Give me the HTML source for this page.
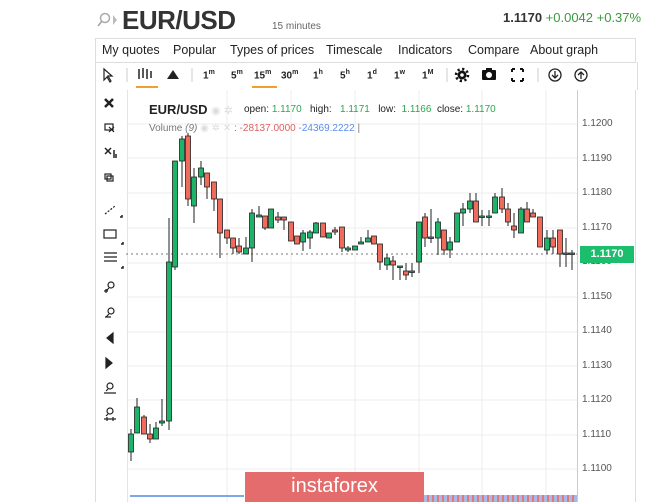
<!DOCTYPE html>
<html><head><meta charset="utf-8"><style>
body{margin:0;width:665px;height:502px;background:#fff;font-family:"Liberation Sans",sans-serif;position:relative;overflow:hidden;color:#222}
.a{position:absolute;white-space:nowrap}
.menu{left:95px;top:38px;width:539px;height:23px;border:1px solid #ddd;font-size:12.5px}
.menu span{position:absolute;top:4px}
.tb{font-size:10px;font-weight:bold;top:69px}
.tb sup{font-size:7px}
.g{color:#2aa84a}
</style></head><body>
<svg class="a" style="left:97px;top:11px" width="22" height="18"><circle cx="8" cy="7" r="4.5" fill="none" stroke="#aaa" stroke-width="1.5"/><line x1="5" y1="10" x2="1" y2="15" stroke="#aaa" stroke-width="1.8"/><path d="M16 4 L20 9 L16 14Z" fill="#bbb"/></svg>
<div class="a" style="left:122px;top:5px;font-size:26px;font-weight:bold;color:#333;letter-spacing:-0.5px">EUR/USD</div>
<div class="a" style="left:272px;top:21px;font-size:10px;color:#666">15 minutes</div>
<div class="a" style="left:503px;top:10px;font-size:13px;font-weight:bold;color:#333">1.1170 <span style="font-weight:normal;color:#3a9a3a">+0.0042 +0.37%</span></div>
<div class="a menu"><span style="left:6px">My quotes</span><span style="left:77px">Popular</span><span style="left:134px">Types of prices</span><span style="left:230px">Timescale</span><span style="left:302px">Indicators</span><span style="left:372px">Compare</span><span style="left:434px">About graph</span></div>
<div class="a" style="left:95px;top:62px;width:541px;height:28px;border-left:1px solid #ddd;border-right:1px solid #ddd"></div>
<svg class="a" style="left:95px;top:62px" width="540" height="28">
<path d="M9 7 L9 18 L12 15 L15 20 L16 19 L13 14 L17 14Z" fill="none" stroke="#222" stroke-width="1.2"/>
<line x1="32" y1="6" x2="32" y2="20" stroke="#ccc"/>
<g stroke="#222" stroke-width="1.5"><line x1="44" y1="7" x2="44" y2="17"/><line x1="48" y1="6" x2="48" y2="16"/><line x1="52" y1="7" x2="52" y2="17"/><line x1="56" y1="9" x2="56" y2="16"/></g>
<rect x="41" y="24" width="22" height="2" fill="#f0a030"/>
<path d="M72 17 L78 8 L84 17Z" fill="#222"/>
<line x1="97" y1="6" x2="97" y2="20" stroke="#ccc"/>
<rect x="157" y="24" width="25" height="2" fill="#f0a030"/>
<line x1="352" y1="6" x2="352" y2="20" stroke="#ccc"/>
<circle cx="367" cy="13" r="4.5" fill="#111"/><circle cx="367" cy="13" r="6" fill="none" stroke="#111" stroke-width="2.5" stroke-dasharray="2.2 2.5"/><circle cx="367" cy="13" r="1.8" fill="#fff"/>
<rect x="387" y="8" width="14" height="10" rx="1" fill="#111"/><rect x="391" y="6" width="6" height="3" fill="#111"/><circle cx="394" cy="13" r="3" fill="#fff"/>
<path d="M417 7h3M417 7v3M428 7h-3M428 7v3M417 19h3M417 19v-3M428 19h-3M428 19v-3" stroke="#111" stroke-width="2"/>
<line x1="443" y1="6" x2="443" y2="20" stroke="#ccc"/>
<circle cx="460" cy="13" r="6" fill="none" stroke="#222" stroke-width="1.3"/><path d="M460 9v7M457 13l3 3 3-3" stroke="#222" fill="none" stroke-width="1.3"/>
<circle cx="486" cy="13" r="6" fill="none" stroke="#222" stroke-width="1.3"/><path d="M486 17v-7M483 13l3-3 3 3" stroke="#222" fill="none" stroke-width="1.3"/>
</svg>
<div class="a tb" style="left:203px">1<sup>m</sup></div>
<div class="a tb" style="left:231px">5<sup>m</sup></div>
<div class="a tb" style="left:254px">15<sup>m</sup></div>
<div class="a tb" style="left:281px">30<sup>m</sup></div>
<div class="a tb" style="left:313px">1<sup>h</sup></div>
<div class="a tb" style="left:340px">5<sup>h</sup></div>
<div class="a tb" style="left:367px">1<sup>d</sup></div>
<div class="a tb" style="left:394px">1<sup>w</sup></div>
<div class="a tb" style="left:422px">1<sup>M</sup></div>
<div class="a" style="left:95px;top:90px;width:31px;height:412px;border-left:1px solid #ddd;border-right:1px solid #e4e4e4"></div>
<div class="a" style="left:635px;top:90px;width:1px;height:412px;background:#ddd"></div>
<div class="a" style="left:577px;top:90px;width:1px;height:412px;background:#ccc"></div>
<svg class="a" style="left:95px;top:90px" width="31" height="340" fill="none" stroke="#222" stroke-width="1.2">
<path d="M10 9l8 8M18 9l-8 8" stroke-width="2.5"/>
<rect x="10" y="34" width="8" height="6"/><path d="M14 37l5 5M19 37l-5 5"/>
<path d="M10 58l6 6M16 58l-6 6M19 60v8M21 64v4" stroke-width="1.5"/>
<rect x="10" y="84" width="6" height="5"/><rect x="12" y="86" width="6" height="5"/>
<path d="M10 124l10-8" stroke-dasharray="2 1.5"/><path d="M25 127l2 0 0-2" stroke-width="1.5"/>
<rect x="9" y="140" width="12" height="8"/><path d="M26 154l2 0 0-2" stroke-width="1.5"/>
<path d="M9 163h13M9 167h13M9 171h13"/><path d="M26 178l2 0 0-2" stroke-width="1.5"/>
<circle cx="16" cy="195" r="3"/><path d="M14 198l-3 3M9 201h4M11 199v4"/>
<circle cx="16" cy="221" r="3"/><path d="M14 224l-3 3M10 227h6"/>
<path d="M18 243v10l-6-5z" fill="#222"/><path d="M11 268v10l6-5z" fill="#222"/>
<circle cx="15" cy="296" r="3"/><path d="M13 299l-2 2M9 303h12"/>
<circle cx="15" cy="321" r="3"/><path d="M13 324l-2 2M9 329h12M12 327v4M18 327v4"/>
</svg>
<svg class="a" style="left:126px;top:90px" width="451" height="412">
<g stroke="#eee">
<line x1="101" y1="0" x2="101" y2="412"/><line x1="165" y1="0" x2="165" y2="412"/><line x1="229" y1="0" x2="229" y2="412"/><line x1="293" y1="0" x2="293" y2="412"/><line x1="356" y1="0" x2="356" y2="412"/><line x1="420" y1="0" x2="420" y2="412"/>
<line x1="0" y1="34" x2="451" y2="34"/><line x1="0" y1="68" x2="451" y2="68"/><line x1="0" y1="103" x2="451" y2="103"/><line x1="0" y1="138" x2="451" y2="138"/><line x1="0" y1="173" x2="451" y2="173"/><line x1="0" y1="207" x2="451" y2="207"/><line x1="0" y1="242" x2="451" y2="242"/><line x1="0" y1="276" x2="451" y2="276"/><line x1="0" y1="310" x2="451" y2="310"/><line x1="0" y1="345" x2="451" y2="345"/><line x1="0" y1="379" x2="451" y2="379"/>
</g>
<line x1="0" y1="164" x2="451" y2="164" stroke="#777" stroke-dasharray="2 3"/>
</svg>
<svg class="a" style="left:0;top:0" width="665" height="502" id="c"></svg>
<div class="a" style="left:149px;top:102px;font-size:13px;font-weight:bold;color:#222">EUR/USD <span style="color:#ddd;font-weight:normal;font-size:11px">◉ ✲</span></div>
<div class="a" style="left:244px;top:104px;font-size:10px;color:#222">open: <span class="g">1.1170</span>&nbsp;&nbsp; high:&nbsp;&nbsp; <span class="g">1.1171</span>&nbsp;&nbsp; low:&nbsp; <span class="g">1.1166</span>&nbsp; close: <span class="g">1.1170</span></div>
<div class="a" style="left:149px;top:123px;font-size:10px;color:#777">Volume <i>(9)</i> <span style="color:#ddd">◉ ✲ ✕</span> : <span style="color:#e06060">-28137.0000</span> <span style="color:#5b8def">-24369.2222</span> |</div>
<div class="a" style="left:582px;top:107px;font-size:10px;color:#555;line-height:34.5px">1.1200<br>1.1190<br>1.1180<br>1.1170<br>1.1160<br>1.1150<br>1.1140<br>1.1130<br>1.1120<br>1.1110<br>1.1100</div>
<div class="a" style="left:580px;top:246px;width:54px;height:17px;background:#1dbd6e;color:#fff;font-size:11px;font-weight:bold;text-align:center;line-height:17px">1.1170</div>
<div class="a" style="left:130px;top:495px;width:114px;height:2px;background:#7fa7e8"></div>
<div class="a" style="left:424px;top:495px;width:153px;height:7px;background:repeating-linear-gradient(90deg,#a8b8e8 0 3px,#e07a7a 3px 5px)"></div>
<div class="a" style="left:245px;top:472px;width:179px;height:30px;background:#e46c6c;color:#fff;font-size:20px;text-align:center;line-height:28px">instaforex</div>
<script>
var d=[[131,434,452,429,461,1],[137,407,433,398,433,1],[144,417,434,415,434,0],[150,434,439,424,443,0],[156,428,439,422,439,1],[162,421,423,399,426,1],[169,262,421,218,430,1],[175,161,267,161,270,1],[182,139,161,136,187,1],[188,136,199,133,206,0],[194,177,206,168,223,1],[201,168,177,161,185,1],[207,173,187,173,199,0],[214,182,199,182,211,0],[220,199,233,199,258,0],[227,230,238,230,244,0],[233,238,248,238,254,0],[239,246,252,238,254,0],[246,248,254,237,254,1],[252,213,248,209,262,1],[259,215,217,206,217,1],[265,216,228,216,230,0],[271,209,228,209,228,1],[278,217,220,212,223,0],[284,217,220,217,230,0],[291,222,241,222,241,0],[297,236,244,236,244,0],[303,233,242,230,251,1],[310,232,238,230,249,1],[316,223,233,222,233,1],[323,223,237,223,237,0],[329,233,238,233,238,1],[335,230,232,227,235,0],[342,227,248,227,252,0],[348,248,250,246,252,1],[355,246,250,246,250,1],[361,242,244,237,244,1],[368,238,242,230,242,1],[374,236,244,236,244,0],[380,244,262,244,270,0],[387,258,265,254,270,1],[393,261,265,256,280,0],[400,266,267,266,280,1],[406,271,275,263,280,0],[412,271,272,263,277,1],[419,222,262,222,273,1],[425,217,238,213,247,0],[431,237,238,209,243,1],[438,222,238,218,255,1],[444,230,250,230,255,0],[450,242,250,237,258,1],[457,213,242,213,242,1],[463,209,213,203,226,1],[470,201,209,193,213,1],[476,201,222,193,222,0],[482,216,217,210,226,1],[489,216,217,210,226,1],[495,197,213,193,213,1],[502,197,209,188,213,0],[508,209,222,203,226,0],[514,226,230,213,238,0],[521,209,233,207,233,1],[527,209,222,202,222,0],[533,213,217,209,217,0],[540,217,247,217,247,0],[547,238,250,230,254,1],[553,238,247,230,254,0],[560,230,254,230,267,0],[566,253,254,238,267,1],[572,253,254,250,270,1]];
var s='';d.forEach(function(c){var x=c[0];s+='<line x1="'+x+'" y1="'+c[3]+'" x2="'+x+'" y2="'+c[4]+'" stroke="#222" stroke-width="1"/>';var h=Math.max(c[2]-c[1],1.5);s+='<rect x="'+(x-2.5)+'" y="'+c[1]+'" width="5" height="'+h+'" fill="'+(c[5]?'#1db46a':'#ef6b5b')+'" stroke="#222" stroke-width="0.8"/>';});
document.getElementById('c').innerHTML=s;
</script>
</body></html>
